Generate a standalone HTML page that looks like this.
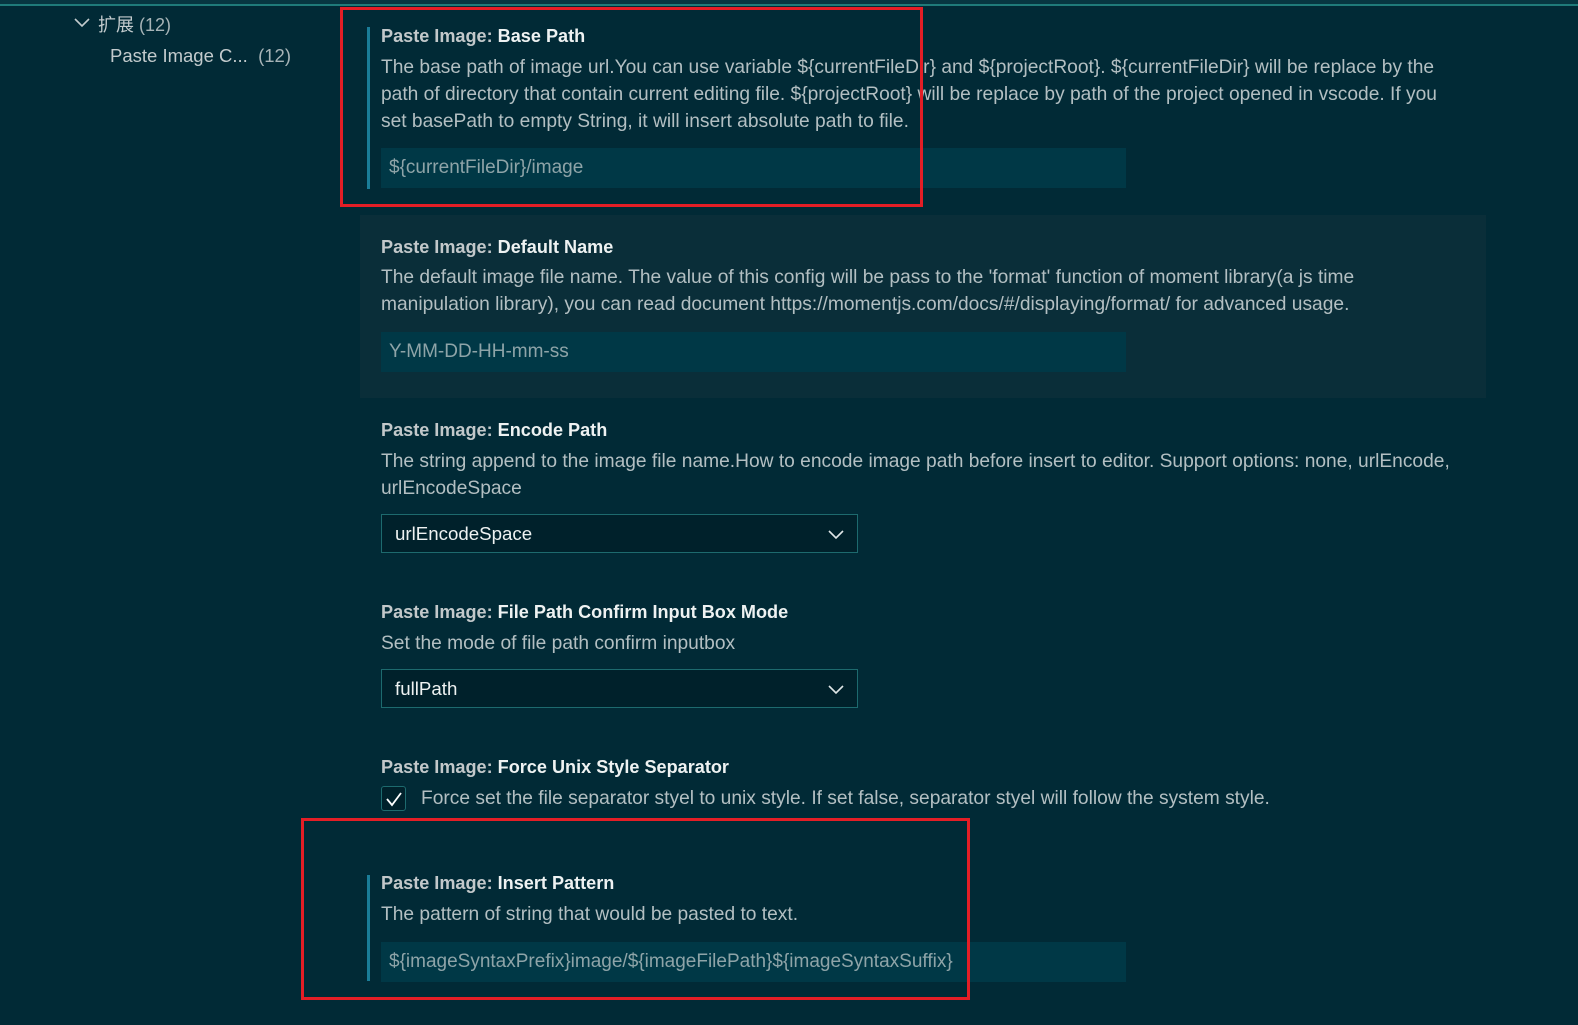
<!DOCTYPE html>
<html><head><meta charset="utf-8"><style>
body{margin:0;width:1578px;height:1025px;background:#012a36;font-family:"Liberation Sans","Noto Sans CJK SC",sans-serif;color:#c3cbcd;overflow:hidden;position:relative}
.a{position:absolute;white-space:nowrap}
.t{font-size:18.1px;color:#c2c8ca;font-weight:bold}
.t b{color:#eef2f2}
.d{font-size:19.2px;color:#b3bfc2;line-height:27px}
.inp{position:absolute;background:#003846;height:40px;font-size:19px;color:#8ea4a8;line-height:40px;padding-left:8px;box-sizing:border-box}
.sel{position:absolute;background:#00212b;border:1px solid #1d6a6e;height:39px;width:477px;box-sizing:border-box;font-size:18.7px;color:#eef2f2;line-height:37px;padding-left:13px}
.bar{position:absolute;width:3px;background:#1a7d98}
.red{position:absolute;border:3px solid #e41e26;box-sizing:border-box}
</style></head><body>
<div class="a" style="left:0;top:0;width:1578px;height:4px;background:#073641"></div>
<div class="a" style="left:0;top:4px;width:1578px;height:2px;background:#1f7b7a"></div>
<svg class="a" style="left:73px;top:15px" width="18" height="14"><path d="M2 4 L9 11 L16 4" stroke="#c3cbcd" stroke-width="1.6" fill="none"/></svg>
<div class="a" style="left:98px;top:11px;font-size:18px;color:#c3cbcd">扩展 <span style="color:#a7b4b7">(12)</span></div>
<div class="a" style="left:110px;top:45px;font-size:18.5px;color:#c3cbcd">Paste Image C...&nbsp;&nbsp;<span style="color:#a7b4b7">(12)</span></div>

<div class="bar" style="left:367px;top:27px;height:162px"></div>
<div class="a t" style="left:381px;top:26px">Paste Image: <b>Base Path</b></div>
<div class="a d" style="left:381px;top:54px">The base path of image url.You can use variable ${currentFileDir} and ${projectRoot}. ${currentFileDir} will be replace by the<br>path of directory that contain current editing file. ${projectRoot} will be replace by path of the project opened in vscode. If you<br>set basePath to empty String, it will insert absolute path to file.</div>
<div class="inp" style="left:381px;top:148px;width:745px">${currentFileDir}/image</div>
<div class="red" style="left:340px;top:7px;width:583px;height:200px"></div>

<div class="a" style="left:360px;top:215px;width:1126px;height:183px;background:#0a2e39"></div>
<div class="a t" style="left:381px;top:237px">Paste Image: <b>Default Name</b></div>
<div class="a d" style="left:381px;top:264px">The default image file name. The value of this config will be pass to the 'format' function of moment library(a js time<br>manipulation library), you can read document https://momentjs.com/docs/#/displaying/format/ for advanced usage.</div>
<div class="inp" style="left:381px;top:332px;width:745px">Y-MM-DD-HH-mm-ss</div>

<div class="a t" style="left:381px;top:420px">Paste Image: <b>Encode Path</b></div>
<div class="a d" style="left:381px;top:448px">The string append to the image file name.How to encode image path before insert to editor. Support options: none, urlEncode,<br>urlEncodeSpace</div>
<div class="sel" style="left:381px;top:514px">urlEncodeSpace</div>
<svg class="a" style="left:827px;top:527px" width="18" height="14"><path d="M2 4 L9 11 L16 4" stroke="#dfe6e7" stroke-width="1.6" fill="none"/></svg>

<div class="a t" style="left:381px;top:602px">Paste Image: <b>File Path Confirm Input Box Mode</b></div>
<div class="a d" style="left:381px;top:630px">Set the mode of file path confirm inputbox</div>
<div class="sel" style="left:381px;top:669px">fullPath</div>
<svg class="a" style="left:827px;top:682px" width="18" height="14"><path d="M2 4 L9 11 L16 4" stroke="#dfe6e7" stroke-width="1.6" fill="none"/></svg>

<div class="a t" style="left:381px;top:757px">Paste Image: <b>Force Unix Style Separator</b></div>
<div class="a" style="left:381px;top:786px;width:25px;height:25px;border:1px solid #1d6a6e;border-radius:3px;background:#00212b;box-sizing:border-box"></div>
<svg class="a" style="left:381px;top:786px" width="26" height="26"><path d="M6 13 L11 19 L20 7" stroke="#fff" stroke-width="1.8" fill="none"/></svg>
<div class="a d" style="left:421px;top:785px">Force set the file separator styel to unix style. If set false, separator styel will follow the system style.</div>

<div class="bar" style="left:367px;top:875px;height:106px"></div>
<div class="a t" style="left:381px;top:873px">Paste Image: <b>Insert Pattern</b></div>
<div class="a d" style="left:381px;top:901px">The pattern of string that would be pasted to text.</div>
<div class="inp" style="left:381px;top:942px;width:745px">${imageSyntaxPrefix}image/${imageFilePath}${imageSyntaxSuffix}</div>
<div class="red" style="left:301px;top:818px;width:669px;height:182px"></div>
</body></html>
